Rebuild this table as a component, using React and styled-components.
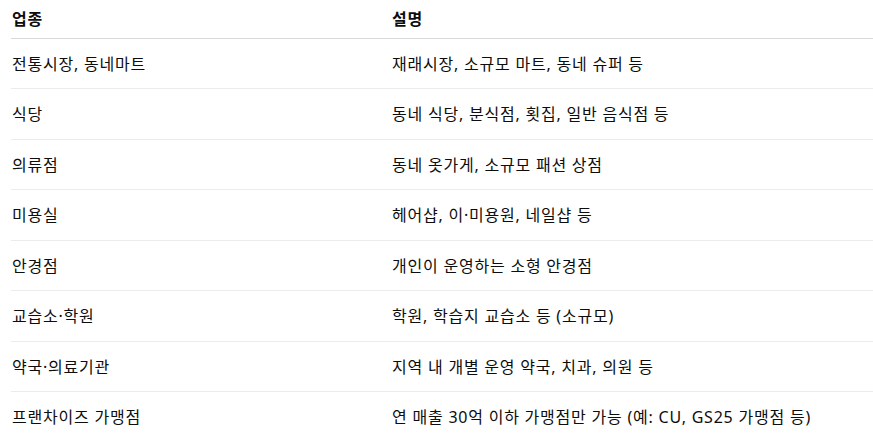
import React from "react";
import styled, { createGlobalStyle } from "styled-components";

const Global = createGlobalStyle`
  html, body { margin: 0; padding: 0; background: #fff; }
  body {
    font-family: "Noto Sans", "Noto Sans CJK KR", sans-serif;
    color: #0d0d0d;
  }
`;

const Wrap = styled.div`
  padding-left: 11px;
`;

const Table = styled.table`
  width: 862px;
  border-collapse: collapse;
  font-size: 16px;
  letter-spacing: 0.78px;
  line-height: 20px;
`;

const HeadCell = styled.th`
  text-align: left;
  font-weight: 700;
  height: 38px;
  padding: 0 0 0 ${(p) => (p.$first ? "1px" : "0")};
  box-sizing: border-box;
  vertical-align: middle;
  border-bottom: 1px solid #d9d9d9;
  width: ${(p) => (p.$first ? "381px" : "auto")};
`;

const Row = styled.tr`
  border-bottom: ${(p) => (p.$last ? "none" : "1px solid #ececec")};
`;

const Cell = styled.td`
  height: 48.5px;
  padding: 1px 0 0 ${(p) => (p.$first ? "1px" : "0")};
  vertical-align: middle;
`;

const rows = [
  ["전통시장, 동네마트", "재래시장, 소규모 마트, 동네 슈퍼 등"],
  ["식당", "동네 식당, 분식점, 횟집, 일반 음식점 등"],
  ["의류점", "동네 옷가게, 소규모 패션 상점"],
  ["미용실", "헤어샵, 이·미용원, 네일샵 등"],
  ["안경점", "개인이 운영하는 소형 안경점"],
  ["교습소·학원", "학원, 학습지 교습소 등 (소규모)"],
  ["약국·의료기관", "지역 내 개별 운영 약국, 치과, 의원 등"],
  ["프랜차이즈 가맹점", "연 매출 30억 이하 가맹점만 가능 (예: CU, GS25 가맹점 등)"],
];

export default function App() {
  return (
    <Wrap>
      <Global />
      <Table>
        <thead>
          <tr>
            <HeadCell $first>업종</HeadCell>
            <HeadCell>설명</HeadCell>
          </tr>
        </thead>
        <tbody>
          {rows.map(([a, b], i) => (
            <Row key={i} $last={i === rows.length - 1}>
              <Cell $first>{a}</Cell>
              <Cell>{b}</Cell>
            </Row>
          ))}
        </tbody>
      </Table>
    </Wrap>
  );
}
